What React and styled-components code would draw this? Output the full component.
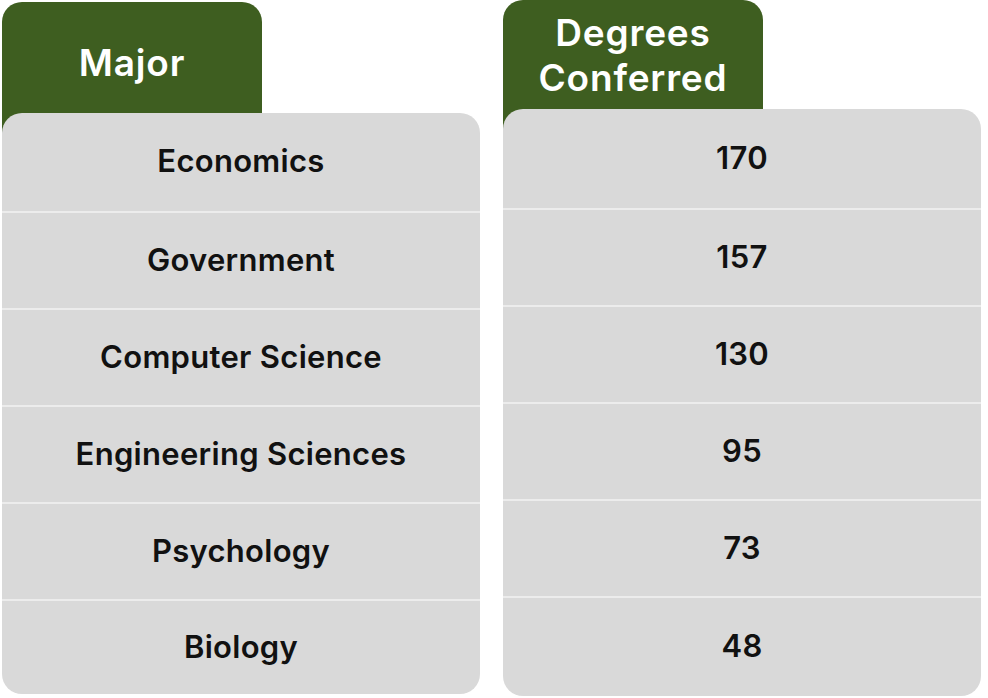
import React from 'react';
import styled, { createGlobalStyle } from 'styled-components';

const GlobalStyle = createGlobalStyle`
    body {
        margin: 0;
        background: #ffffff;
        font-family: "Inter", "Liberation Sans", sans-serif;
    }
`;

const Page = styled.div`
    display: flex;
    flex-direction: row;
    align-items: flex-start;
    gap: 23px;
    width: 988px;
    height: 698px;
    padding-left: 2px;
    box-sizing: border-box;
`;

const Column = styled.div`
    display: flex;
    flex-direction: column;
    width: 478px;
    margin-top: ${(p) => p.offset}px;
`;

const Tab = styled.div`
    display: flex;
    align-items: center;
    justify-content: center;
    width: 260px;
    height: ${(p) => p.visible + 20}px;
    padding-bottom: 20px;
    padding-top: ${(p) => p.shift}px;
    box-sizing: border-box;
    background: #3e5e20;
    border-radius: 20px 20px 0 0;
    color: #ffffff;
    font-size: 37px;
    font-weight: 600;
    line-height: 45px;
    text-align: center;
    letter-spacing: 0.8px;
`;

const Card = styled.div`
    display: flex;
    flex-direction: column;
    margin-top: -20px;
    background: #d9d9d9;
    border-radius: 20px;
    overflow: hidden;
    position: relative;
`;

const Row = styled.div`
    display: flex;
    align-items: center;
    justify-content: center;
    height: ${(p) => p.h}px;
    border-top: ${(p) => (p.first ? 'none' : '2px solid #ececec')};
    box-sizing: border-box;
    color: #111111;
    font-size: 31px;
    font-weight: 600;
    letter-spacing: 0.3px;
    padding-bottom: 3px;
`;

const majors = ['Economics', 'Government', 'Computer Science', 'Engineering Sciences', 'Psychology', 'Biology'];
const degrees = ['170', '157', '130', '95', '73', '48'];

const App = () => {
    return (
        <>
            <GlobalStyle />
            <Page>
                <Column offset={2}>
                    <Tab visible={111} shift={10}>Major</Tab>
                    <Card>
                        {majors.map((m, i) => (
                            <Row key={m} first={i === 0} h={i === 0 ? 98 : i === 5 ? 95 : 97}>
                                {m}
                            </Row>
                        ))}
                    </Card>
                </Column>
                <Column offset={0}>
                    <Tab visible={109} shift={0}>
                        Degrees
                        <br />
                        Conferred
                    </Tab>
                    <Card>
                        {degrees.map((d, i) => (
                            <Row key={d} first={i === 0} h={i === 0 ? 99 : i === 5 ? 100 : 97}>
                                {d}
                            </Row>
                        ))}
                    </Card>
                </Column>
            </Page>
        </>
    );
};

export default App;
